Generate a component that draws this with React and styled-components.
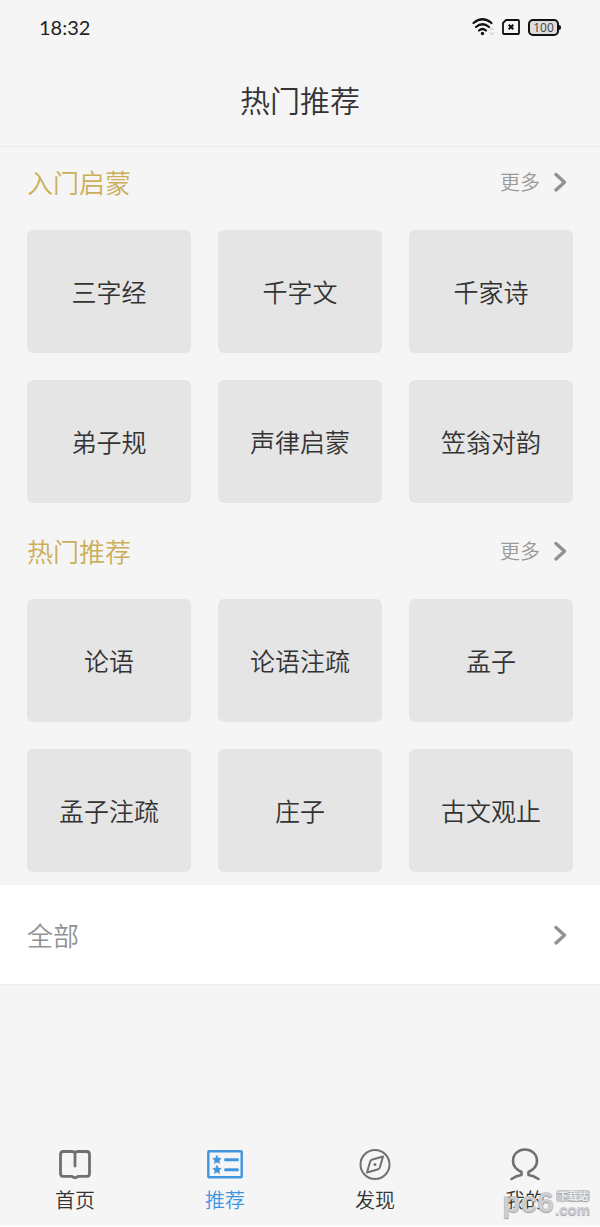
import React from 'react';
import styled, { createGlobalStyle } from 'styled-components';

const GlobalStyle = createGlobalStyle`
  * {
    box-sizing: border-box;
  }

  body {
    margin: 0;
    background-color: #fdfdfd;
    color: #333;
    font-family: 'Noto Sans CJK SC', sans-serif;
    font-weight: 350;
  }

  button {
    font-family: inherit;
    font-weight: inherit;
    color: inherit;
    border: none;
    cursor: pointer;
  }

  a {
    color: inherit;
    text-decoration: none;
  }
`;

const Page = styled.div`
  display: flex;
  flex-direction: column;
  min-height: 100vh;
  border-bottom: 2px solid #fdfdfd;
  background-color: #f5f5f5;
`;

const StatusBar = styled.div`
  display: flex;
  align-items: center;
  justify-content: space-between;
  height: 54px;
  padding: 0 38px 0 39px;
`;

const Time = styled.span`
  font-family: Lato, sans-serif;
  font-size: 20px;
  line-height: 24px;
  font-weight: 400;
  color: #222;
`;

const StatusIcons = styled.div`
  display: flex;
  align-items: center;
  gap: 8px;
`;

const Battery = styled.span`
  position: relative;
  width: 31px;
  height: 17px;
  margin-right: 3px;
  border: 2px solid #111;
  border-radius: 5px;
  background-color: #ddd;
  font-family: 'Open Sans', sans-serif;
  font-size: 12px;
  line-height: 13px;
  font-weight: 400;
  text-align: center;
  color: #444;

  &::after {
    content: '';
    position: absolute;
    top: 4px;
    right: -4px;
    width: 2px;
    height: 5px;
    border-radius: 0 2px 2px 0;
    background-color: #111;
  }
`;

const Header = styled.header`
  display: flex;
  align-items: center;
  justify-content: center;
  height: 93px;
  padding-bottom: 2px;
  border-bottom: 1px solid #e9e9e9;
`;

const Title = styled.h1`
  margin: 0;
  font-size: 30px;
  line-height: 44px;
  font-weight: inherit;
`;

const Section = styled.section`
  padding: 0 27px 13px;
`;

const SectionHead = styled.div`
  display: flex;
  align-items: center;
  justify-content: space-between;
  height: 70px;
  margin-bottom: 13px;
`;

const SectionTitle = styled.h2`
  margin: 0;
  font-size: 26px;
  line-height: 40px;
  font-weight: inherit;
  color: #ccae5a;
`;

const MoreLink = styled.a`
  display: flex;
  align-items: center;
  gap: 13px;
  padding-right: 6px;
  font-size: 20px;
  line-height: 30px;
  color: #999;
`;

const BookGrid = styled.div`
  display: grid;
  grid-template-columns: repeat(3, 1fr);
  gap: 27px;
`;

const BookCard = styled.button`
  height: 123px;
  padding: 0 0 2px;
  border-radius: 6px;
  background-color: #e5e5e5;
  font-size: 25px;
  line-height: 36px;
`;

const AllLink = styled.a`
  display: flex;
  align-items: center;
  justify-content: space-between;
  height: 100px;
  padding: 0 33px 0 27px;
  border-bottom: 1px solid #eee;
  background-color: #fff;
  font-size: 26px;
  line-height: 40px;
  color: #929292;
`;

const TabBar = styled.nav`
  position: relative;
  display: grid;
  grid-template-columns: repeat(4, 1fr);
  margin-top: auto;
  padding: 8px 0 10px;
`;

const Tab = styled.a`
  display: flex;
  flex-direction: column;
  align-items: center;
  gap: 3px;
  font-size: 20px;
  line-height: 30px;
  color: ${(props) => (props.$active ? '#3f96df' : '#333')};

  svg {
    color: ${(props) => (props.$active ? '#3f96df' : '#707070')};
  }
`;

const Watermark = styled.div`
  position: absolute;
  right: 10px;
  bottom: 7px;
  display: flex;
  align-items: flex-end;
  gap: 1px;
  color: #cdcdd2;
  font-family: 'Liberation Sans', sans-serif;
  font-weight: 700;
  text-shadow: 0 1px 1px #999;
  pointer-events: none;
`;

const MarkName = styled.span`
  font-size: 30px;
  line-height: 32px;
`;

const MarkSide = styled.span`
  display: flex;
  flex-direction: column;
  align-items: flex-end;
  font-size: 15px;
  line-height: 16px;
`;

const MarkTag = styled.span`
  padding: 0 2px;
  border-radius: 3px;
  background-color: #c9c9cd;
  color: #eee;
  font-family: 'Noto Sans CJK SC', sans-serif;
  font-size: 10px;
  line-height: 12px;
`;

const Chevron = () => (
  <svg width="14" height="20" viewBox="0 0 14 20" fill="none" stroke="#929295" strokeWidth="3.4" strokeLinecap="round" strokeLinejoin="round" aria-hidden="true">
    <path d="M3 2.500l8.500 7.700-8.500 7.700" />
  </svg>
);

const WifiIcon = () => (
  <svg width="22" height="18" viewBox="0 0 22 18" fill="none" stroke="#111" strokeWidth="2.2" strokeLinecap="round" aria-hidden="true">
    <path d="M1.500 5Q10.500-2.500 19.500 5M4 9Q10.500 3.500 17 9M7 12.500Q10.500 9.500 14 12.500" />
    <circle cx="10.500" cy="15.500" r="1.700" fill="#111" stroke="none" />
    <path d="M18 12l1.800-2 1.800 2M18 14.500l1.800 2 1.800-2" stroke="#bbb" strokeWidth="1" />
  </svg>
);

const SimIcon = () => (
  <svg width="18" height="16" viewBox="0 0 18 16" fill="none" stroke="#111" strokeWidth="1.8" strokeLinejoin="round" aria-hidden="true">
    <path d="M4 1h12a1 1 0 0 1 1 1v12a1 1 0 0 1-1 1H2a1 1 0 0 1-1-1V4z" />
    <path d="M6.700 5.700l4.600 4.600M11.300 5.700l-4.600 4.600" strokeWidth="2" />
  </svg>
);

const BookIcon = () => (
  <svg width="36" height="36" viewBox="0 0 36 36" fill="none" stroke="currentColor" strokeWidth="2.800" strokeLinecap="round" strokeLinejoin="round" aria-hidden="true">
    <path d="M18 20V7.500Q17.500 5.500 15 5.500H6.500Q3.500 5.500 3.500 8.500v19Q3.500 30.300 6 30.300H14.500q1 0 1.700.8 1.800 1.200 3.600 0 .700-.8 1.700-.8H30q2.500 0 2.500-2.800V8.500q0-3-3-3H21q-2.500 0-3 2" />
  </svg>
);

const ListIcon = () => (
  <svg width="36" height="36" viewBox="0 0 36 36" fill="none" stroke="currentColor" strokeLinecap="round" strokeLinejoin="round" aria-hidden="true">
    <rect x="1.300" y="5.300" width="33.400" height="26" rx="0.800" strokeWidth="2.400" />
    <path d="M18.500 13.800h12M18.500 23.800h12" strokeWidth="3" />
    <g fill="currentColor" strokeWidth="0.600">
      <path d="M10 9.500l1.300 2.600 2.900.4-2.100 2 .5 2.900-2.600-1.400-2.600 1.400.5-2.900-2.100-2 2.900-.4z" />
      <path d="M10 19.500l1.300 2.600 2.900.4-2.100 2 .5 2.900-2.600-1.400-2.600 1.400.5-2.900-2.100-2 2.900-.4z" />
    </g>
  </svg>
);

const CompassIcon = () => (
  <svg width="36" height="36" viewBox="0 0 36 36" fill="none" stroke="currentColor" strokeWidth="2" strokeLinejoin="round" aria-hidden="true">
    <circle cx="18" cy="18.500" r="14.500" />
    <path d="M26 10.500L15.500 13.500q-1.800.500-2.300 2L10 26.500 20.500 23.500q1.800-.500 2.300-2z" />
    <circle cx="18" cy="18.500" r="1.500" fill="currentColor" stroke="none" />
  </svg>
);

const UserIcon = () => (
  <svg width="36" height="36" viewBox="0 0 36 36" fill="none" stroke="currentColor" strokeWidth="2.600" strokeLinecap="round" strokeLinejoin="round" aria-hidden="true">
    <path d="M4.500 33q5-3.500 10-4v-3Q6 22 6 15C6 8 11.500 3.500 18 3.500S30 8 30 15q0 7-8.500 11v3q5 .500 10 4" />
  </svg>
);

const sections = [
  { title: '入门启蒙', books: ['三字经', '千字文', '千家诗', '弟子规', '声律启蒙', '笠翁对韵'] },
  { title: '热门推荐', books: ['论语', '论语注疏', '孟子', '孟子注疏', '庄子', '古文观止'] },
];

const tabs = [
  { label: '首页', icon: BookIcon },
  { label: '推荐', icon: ListIcon, active: true },
  { label: '发现', icon: CompassIcon },
  { label: '我的', icon: UserIcon },
];

function App() {
  return (
    <Page>
      <GlobalStyle />
      <StatusBar>
        <Time>18:32</Time>
        <StatusIcons>
          <WifiIcon />
          <SimIcon />
          <Battery>100</Battery>
        </StatusIcons>
      </StatusBar>

      <Header>
        <Title>热门推荐</Title>
      </Header>

      <main>
        {sections.map((section) => (
          <Section key={section.title}>
            <SectionHead>
              <SectionTitle>{section.title}</SectionTitle>
              <MoreLink href="#more">
                更多
                <Chevron />
              </MoreLink>
            </SectionHead>
            <BookGrid>
              {section.books.map((book) => (
                <BookCard key={book}>{book}</BookCard>
              ))}
            </BookGrid>
          </Section>
        ))}
        <AllLink href="#all">
          全部
          <Chevron />
        </AllLink>
      </main>

      <TabBar>
        {tabs.map(({ label, icon: Icon, active }) => (
          <Tab key={label} href={`#${label}`} $active={active}>
            <Icon />
            {label}
          </Tab>
        ))}
        <Watermark>
          <MarkName>pc6</MarkName>
          <MarkSide>
            <MarkTag>下载站</MarkTag>
            <span>.com</span>
          </MarkSide>
        </Watermark>
      </TabBar>
    </Page>
  );
}

export default App;
